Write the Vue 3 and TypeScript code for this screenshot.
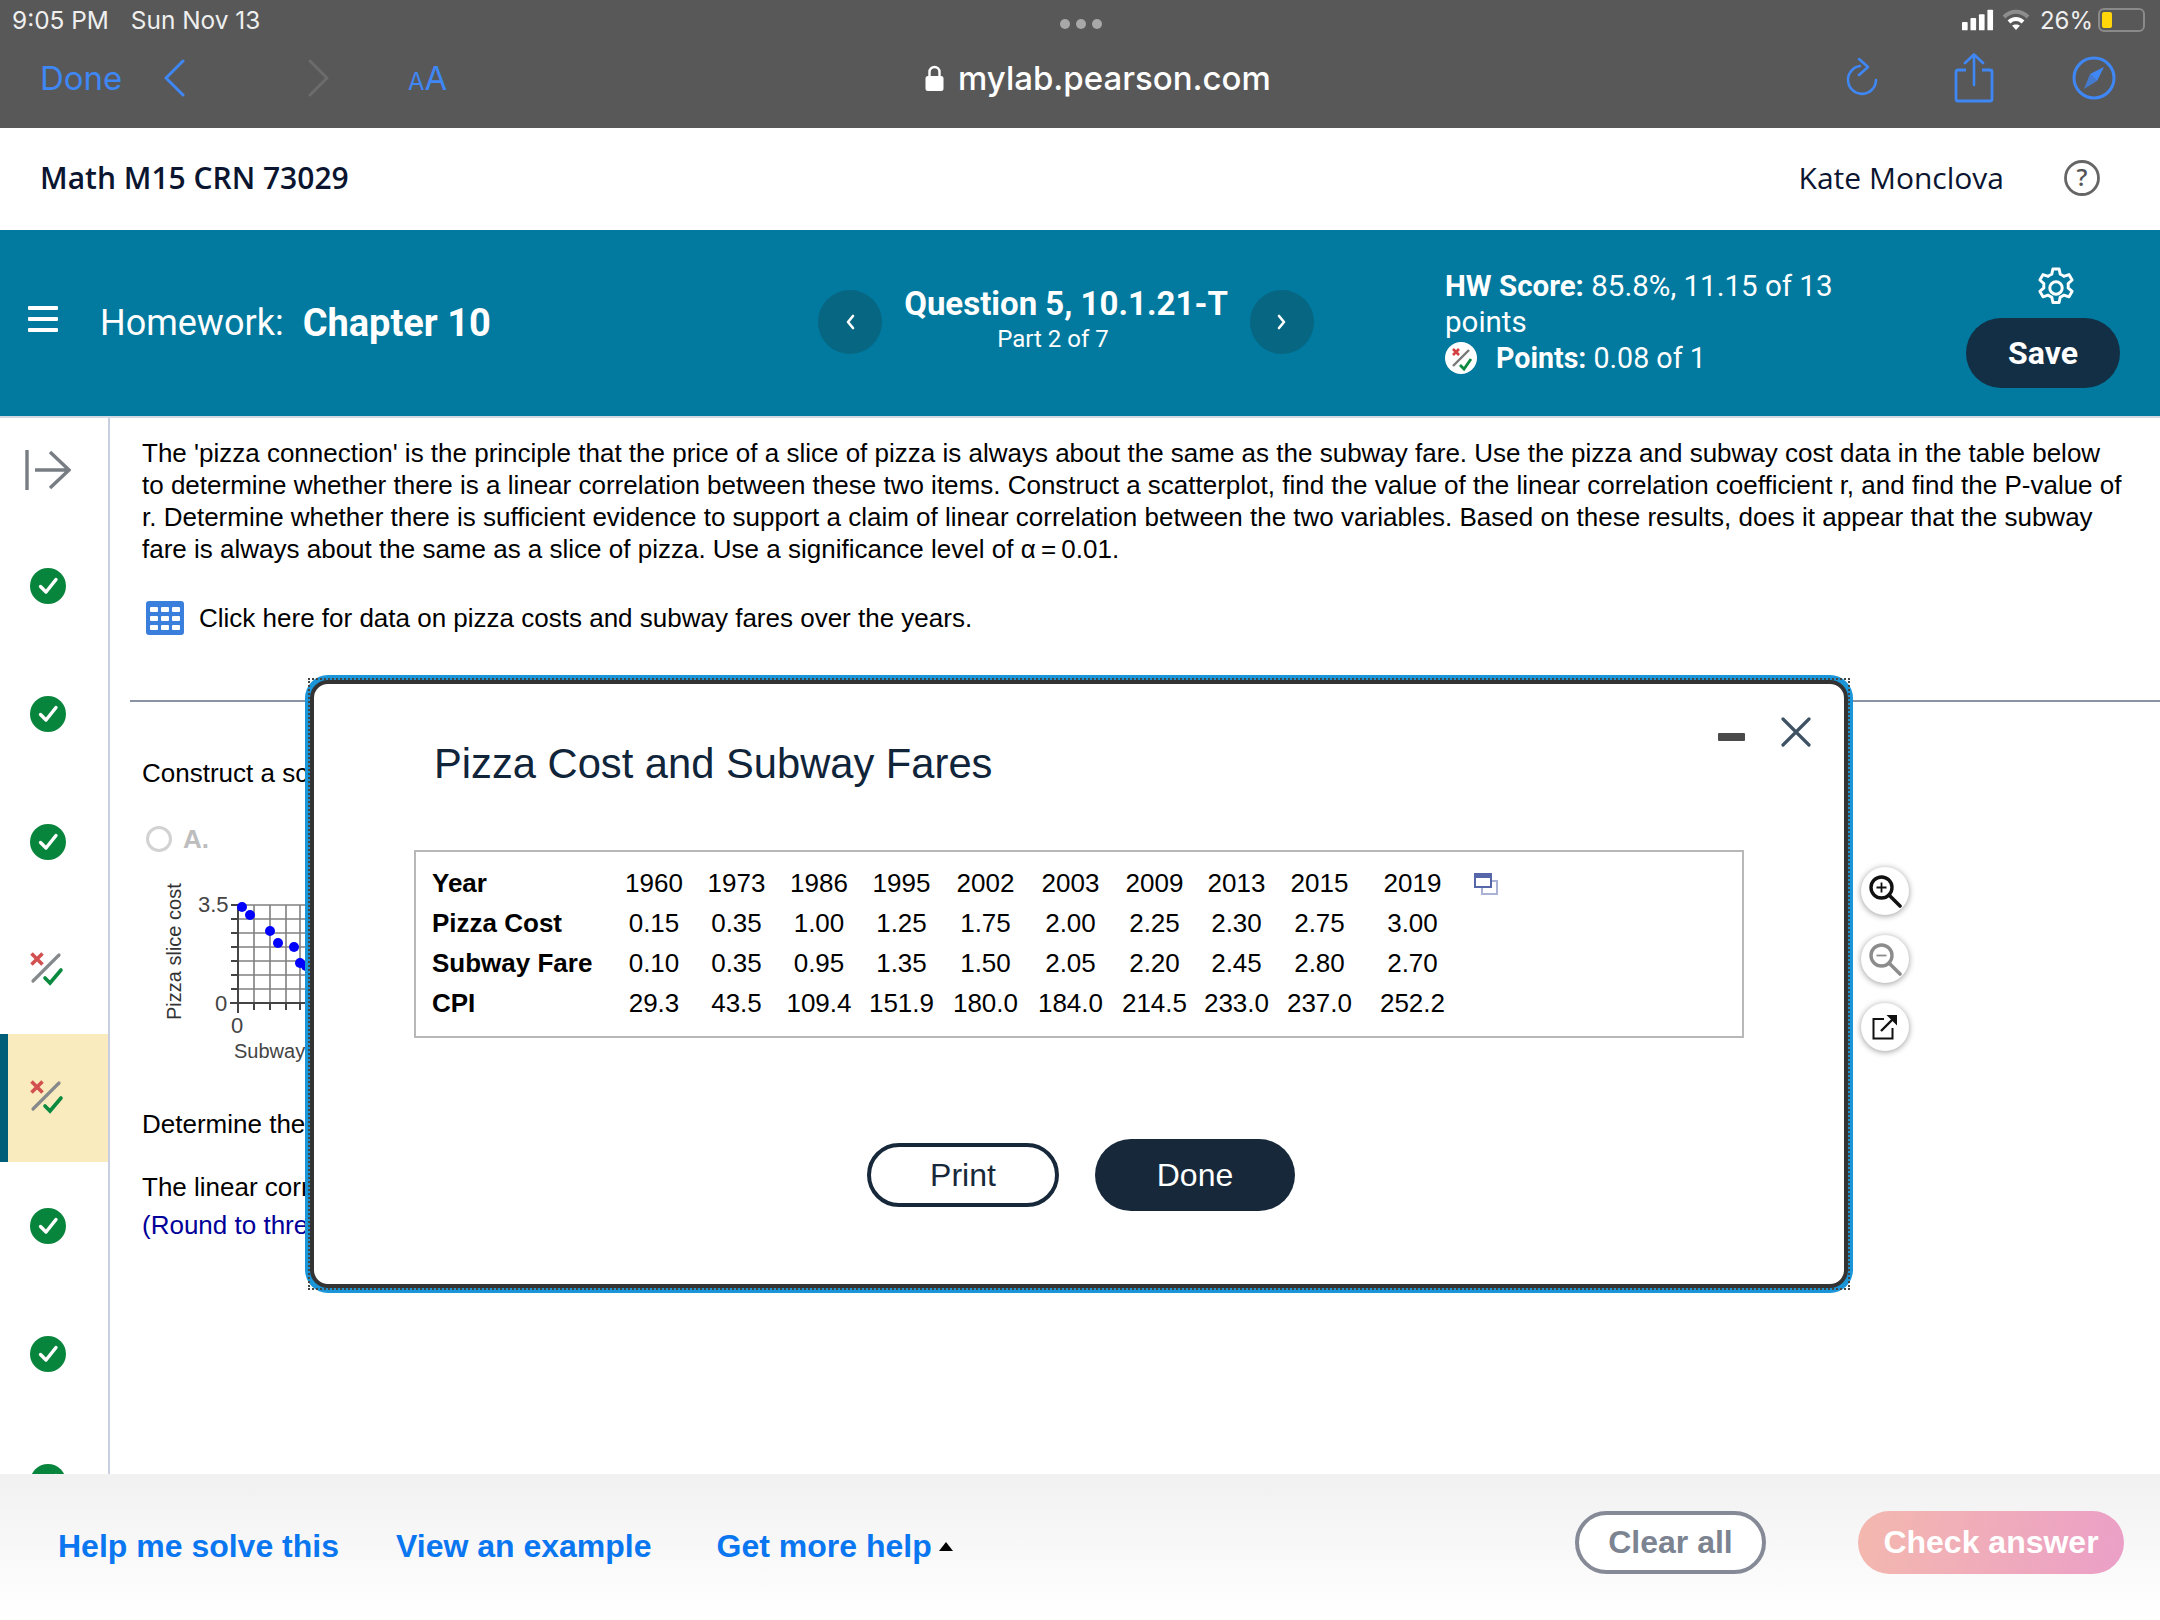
<script setup lang="ts">
// Sidebar question states, top to bottom
const questions = ['done', 'done', 'done', 'partial', 'current', 'done', 'done', 'done']

// Column widths of the data table, label column first
const colWidths = [181, 82, 83, 82, 83, 85, 85, 83, 81, 85, 101]

const rows = [
  { label: 'Year', cells: ['1960', '1973', '1986', '1995', '2002', '2003', '2009', '2013', '2015', '2019'] },
  { label: 'Pizza Cost', cells: ['0.15', '0.35', '1.00', '1.25', '1.75', '2.00', '2.25', '2.30', '2.75', '3.00'] },
  { label: 'Subway Fare', cells: ['0.10', '0.35', '0.95', '1.35', '1.50', '2.05', '2.20', '2.45', '2.80', '2.70'] },
  { label: 'CPI', cells: ['29.3', '43.5', '109.4', '151.9', '180.0', '184.0', '214.5', '233.0', '237.0', '252.2'] },
]

// Scatterplot points, in the chart's own pixels
const points = [
  [82, 27], [90, 35], [110, 51], [118, 63], [134, 67], [140, 83], [146, 86],
]
const gridX = [78, 94, 110, 126, 140, 156]
const gridY = [25, 39, 53, 67, 81, 95, 109, 123]
</script>

<template>
  <div class="page">
    <div class="browser">
      <div class="status">
        <span class="clock">9:05 PM</span>
        <span class="date">Sun Nov 13</span>
        <span class="dots"><i></i><i></i><i></i></span>
        <span class="status-right">
          <svg width="32" height="22" viewBox="0 0 34 22">
            <rect x="0" y="13" width="6" height="9" rx="1" fill="#fff" />
            <rect x="9" y="9" width="6" height="13" rx="1" fill="#fff" />
            <rect x="18" y="5" width="6" height="17" rx="1" fill="#fff" />
            <rect x="27" y="0" width="6" height="22" rx="1" fill="#fff" />
          </svg>
          <svg class="wifi" width="28" height="22" viewBox="0 0 28 22" fill="none">
            <path d="M2 8 C9 1 19 1 26 8" stroke="#8d8d8d" stroke-width="4" />
            <path d="M7 13 C11 9 17 9 21 13" stroke="#fff" stroke-width="4" />
            <path d="M14 21 L10 16.5 C12 15 16 15 18 16.5 Z" fill="#fff" />
          </svg>
          <span class="percent">26%</span>
          <span class="battery"><i></i></span>
        </span>
      </div>
      <div class="toolbar">
        <span class="tb-done">Done</span>
        <svg class="tb-back" width="24" height="38" viewBox="0 0 24 38" fill="none">
          <path d="M21 2 L4 19 L21 36" stroke="#3f87f5" stroke-width="3" stroke-linecap="round" stroke-linejoin="round" />
        </svg>
        <svg class="tb-forward" width="24" height="38" viewBox="0 0 24 38" fill="none">
          <path d="M3 2 L20 19 L3 36" stroke="#6c6c6c" stroke-width="3" stroke-linecap="round" stroke-linejoin="round" />
        </svg>
        <span class="tb-aa"><small>A</small>A</span>
        <span class="tb-url">
          <svg class="lock" width="19" height="26" viewBox="0 0 19 26" fill="none">
            <path d="M4.5 12 V7 a5 5 0 0 1 10 0 V12" stroke="#fff" stroke-width="2.4" />
            <rect x="0.5" y="11" width="18" height="15" rx="2.5" fill="#fff" />
          </svg>
          mylab.pearson.com
        </span>
        <svg class="tb-reload" width="34" height="40" viewBox="0 0 34 40" fill="none">
          <path d="M14 8 A14 14 0 1 0 30 22" stroke="#3f87f5" stroke-width="2.6" stroke-linecap="round" />
          <path d="M13 1 L22 9 L13 17" stroke="#3f87f5" stroke-width="2.6" stroke-linecap="round" stroke-linejoin="round" />
        </svg>
        <svg class="tb-share" width="40" height="50" viewBox="0 0 40 50" fill="none">
          <path d="M12 17 H4 a2 2 0 0 0 -2 2 V46 a2 2 0 0 0 2 2 H36 a2 2 0 0 0 2 -2 V19 a2 2 0 0 0 -2 -2 H28" stroke="#3f87f5" stroke-width="2.8" />
          <path d="M20 32 V2 M11 10 L20 1.5 L29 10" stroke="#3f87f5" stroke-width="2.6" stroke-linecap="round" stroke-linejoin="round" />
        </svg>
        <svg class="tb-compass" width="44" height="44" viewBox="0 0 44 44" fill="none">
          <circle cx="22" cy="22" r="20" stroke="#3f87f5" stroke-width="3" />
          <path d="M32 11 L25 25 L18 18 Z" fill="#3f87f5" />
          <path d="M12 33 L18 18 L25 25 Z" fill="#3f87f5" opacity="0.75" />
        </svg>
      </div>
    </div>

    <header class="course">
      <span class="course-name">Math M15 CRN 73029</span>
      <span class="user-name">Kate Monclova</span>
      <svg class="help" width="36" height="36" viewBox="0 0 36 36" fill="none">
        <circle cx="18" cy="18" r="16.5" stroke="#666" stroke-width="2.8" />
        <text x="18" y="26" text-anchor="middle" class="help-mark">?</text>
      </svg>
    </header>

    <section class="hw-bar">
      <div class="hw-title">
        <span class="burger"><i></i><i></i><i></i></span>
        <span class="hw-label">Homework:</span>
        <strong class="hw-chapter">Chapter 10</strong>
      </div>
      <div class="q-nav">
        <span class="q-arrow">
          <svg width="10" height="16" viewBox="0 0 10 16" fill="none">
            <path d="M8 2 L3 8 L8 14" stroke="#fff" stroke-width="2.6" stroke-linecap="round" stroke-linejoin="round" />
          </svg>
        </span>
        <div class="q-text">
          <strong>Question 5, 10.1.21-T</strong>
          <span>Part 2 of 7</span>
        </div>
        <span class="q-arrow">
          <svg width="10" height="16" viewBox="0 0 10 16" fill="none">
            <path d="M2 2 L7 8 L2 14" stroke="#fff" stroke-width="2.6" stroke-linecap="round" stroke-linejoin="round" />
          </svg>
        </span>
      </div>
      <div class="score">
        <div><b>HW Score:</b> 85.8%, 11.15 of 13 points</div>
        <div class="score-points">
          <svg width="32" height="32" viewBox="0 0 32 32" fill="none">
            <circle cx="16" cy="16" r="16" fill="#fff" />
            <path d="M8 7 L14 13 M14 7 L8 13" stroke="#d2403f" stroke-width="2.6" />
            <path d="M8 24 L24 8" stroke="#777" stroke-width="2.4" />
            <path d="M15 23 L19 27 L26 17" stroke="#0a8a3f" stroke-width="2.8" />
          </svg>
          <span><b>Points:</b> 0.08 of 1</span>
        </div>
      </div>
      <div class="save-col">
        <svg class="gear" width="44" height="44" viewBox="0 0 24 24" fill="none" stroke="#fff" stroke-width="1.6" stroke-linejoin="round">
          <circle cx="12" cy="12" r="3.4" />
          <path d="M10.3 1.6 h3.4 l.6 2.9 a8 8 0 0 1 2 1.15 l2.8-.95 1.7 2.95 -2.2 1.95 a8 8 0 0 1 0 2.3 l2.2 1.95 -1.7 2.95 -2.8-.95 a8 8 0 0 1-2 1.15 l-.6 2.9 h-3.4 l-.6-2.9 a8 8 0 0 1-2-1.15 l-2.8.95 -1.7-2.95 2.2-1.95 a8 8 0 0 1 0-2.3 L3.2 7.65 4.9 4.7 l2.8.95 a8 8 0 0 1 2-1.15 Z" />
        </svg>
        <button class="save">Save</button>
      </div>
    </section>

    <div class="workspace">
      <aside class="sidebar">
        <div class="collapse">
          <svg width="46" height="42" viewBox="0 0 46 42" fill="none" stroke="#777d82" stroke-width="3.4">
            <path d="M2 1 V41" />
            <path d="M10 21 H43 M25 3 L44 21 L25 39" />
          </svg>
        </div>
        <div
          v-for="(state, i) in questions"
          :key="i"
          :class="['side-item', { active: state === 'current' }]"
        >
          <svg v-if="state === 'done'" width="36" height="36" viewBox="0 0 36 36" fill="none">
            <circle cx="18" cy="18" r="18" fill="#08853c" />
            <path d="M10.5 18.5 L16 24 L26 11.5" stroke="#fff" stroke-width="3.4" stroke-linecap="round" stroke-linejoin="round" />
          </svg>
          <svg v-else class="partial" width="34" height="34" viewBox="0 0 34 34" fill="none">
            <path d="M1.5 1.5 L12.5 12.5 M12.5 1.5 L1.5 12.5" stroke="#d2504f" stroke-width="3.6" />
            <path d="M3 29 L29 3" stroke="#85898c" stroke-width="3.2" stroke-linecap="round" />
            <path d="M15 26 L20 31 L31 18" stroke="#0a8a3f" stroke-width="3.6" stroke-linecap="round" />
          </svg>
        </div>
      </aside>

      <main class="content">
        <p class="prompt">
          The 'pizza connection' is the principle that the price of a slice of pizza is always about the same as the subway fare. Use the pizza and subway cost data in the table below to determine whether there is a linear correlation between these two items. Construct a scatterplot, find the value of the linear correlation coefficient r, and find the P-value of r. Determine whether there is sufficient evidence to support a claim of linear correlation between the two variables. Based on these results, does it appear that the subway fare is always about the same as a slice of pizza. Use a significance level of α&#8201;=&#8201;0.01.
        </p>
        <div class="data-link">
          <svg class="table-icon" width="38" height="34" viewBox="0 0 38 34">
            <rect width="38" height="34" rx="3" fill="#3b7fdc" />
            <g fill="#fff">
              <template v-for="r in 3" :key="r">
                <rect v-for="c in 3" :key="c" :x="4 + (c - 1) * 11" :y="6 + (r - 1) * 9" width="8" height="5" rx="1" />
              </template>
            </g>
          </svg>
          <span>Click here for data on pizza costs and subway fares over the years.</span>
        </div>
        <hr class="divider" />
        <p class="construct">Construct a scatterplot.</p>
        <div class="option">
          <span class="radio"></span>
          <b>A.</b>
        </div>
        <svg class="chart" width="200" height="185" viewBox="0 0 200 185" fill="none">
          <text class="axis-title" transform="translate(21 140) rotate(-90)">Pizza slice cost</text>
          <text class="axis-num" x="38" y="32">3.5</text>
          <text class="axis-num" x="55" y="131">0</text>
          <text class="axis-num" x="71" y="153">0</text>
          <text class="axis-name" x="74" y="178">Subway</text>
          <path v-for="x in gridX" :key="'x' + x" :d="`M${x} 25 V123`" stroke="#808080" stroke-width="1.6" />
          <path v-for="y in gridY" :key="'y' + y" :d="`M71 ${y} H160`" stroke="#808080" stroke-width="1.6" />
          <path d="M78 25 V133 M70 123 H160" stroke="#444" stroke-width="2" />
          <path v-for="y in gridY" :key="'t' + y" :d="`M71 ${y} H78`" stroke="#444" stroke-width="2" />
          <path v-for="x in gridX" :key="'u' + x" :d="`M${x} 123 V130`" stroke="#444" stroke-width="2" />
          <circle v-for="(p, i) in points" :key="i" :cx="p[0]" :cy="p[1]" r="5" fill="#0000ff" />
        </svg>
        <p class="determine">Determine the linear correlation coefficient.</p>
        <p class="linear">The linear correlation coefficient is r =</p>
        <p class="round">(Round to three decimal places as needed.)</p>
      </main>
    </div>

    <footer class="actions">
      <a class="help-link">Help me solve this</a>
      <a class="help-link">View an example</a>
      <a class="help-link more">Get more help <i class="caret"></i></a>
      <button class="clear">Clear all</button>
      <button class="check">Check answer</button>
    </footer>

    <!-- Dialog over the page -->
    <div class="dialog">
      <div class="dialog-tools">
        <span class="minimize"></span>
        <svg width="30" height="30" viewBox="0 0 30 30" fill="none">
          <path d="M2 2 L28 28 M28 2 L2 28" stroke="#3f5263" stroke-width="3.2" stroke-linecap="round" />
        </svg>
      </div>
      <h2 class="dialog-title">Pizza Cost and Subway Fares</h2>
      <div class="table-box">
        <table class="data">
          <colgroup>
            <col v-for="(w, i) in colWidths" :key="i" :style="{ width: w + 'px' }" />
          </colgroup>
          <tbody>
            <tr v-for="row in rows" :key="row.label">
              <th>{{ row.label }}</th>
              <td v-for="(c, i) in row.cells" :key="i">{{ c }}</td>
            </tr>
          </tbody>
        </table>
        <svg class="copy" width="24" height="22" viewBox="0 0 24 22" fill="none">
          <rect x="8" y="8" width="15" height="13" stroke="#aab3d6" stroke-width="2" />
          <rect x="1" y="1" width="16" height="13" fill="#fff" stroke="#5567a8" stroke-width="2" />
          <rect x="1" y="1" width="16" height="4" fill="#5567a8" />
        </svg>
      </div>
      <div class="dialog-buttons">
        <button class="print">Print</button>
        <button class="done">Done</button>
      </div>
    </div>

    <!-- Floating zoom tools beside the dialog -->
    <div class="float-tools">
      <span class="float-btn">
        <svg width="34" height="34" viewBox="0 0 34 34" fill="none" stroke="#111">
          <circle cx="13.5" cy="13.5" r="10.5" stroke-width="3.4" />
          <path d="M21 21 L32 32" stroke-width="3.6" stroke-linecap="round" />
          <path d="M8.5 13.5 H18.5 M13.5 8.5 V18.5" stroke-width="1.8" />
        </svg>
      </span>
      <span class="float-btn">
        <svg width="34" height="34" viewBox="0 0 34 34" fill="none" stroke="#8c8c8c">
          <circle cx="13.5" cy="13.5" r="10.5" stroke-width="3.4" />
          <path d="M21 21 L32 32" stroke-width="3.6" stroke-linecap="round" />
          <path d="M8.5 13.5 H18.5" stroke-width="1.8" />
        </svg>
      </span>
      <span class="float-btn">
        <svg width="26" height="26" viewBox="0 0 26 26" fill="none" stroke="#111" stroke-width="2">
          <path d="M12 5 H1.5 V24.5 H20.5 V14" />
          <path d="M9 17 L21 5" stroke-width="2.4" />
          <path d="M14.5 1 H25 V11.5 Z" fill="#111" stroke="none" />
        </svg>
      </span>
    </div>
  </div>
</template>

<style scoped>
.page {
  position: relative;
  width: 2160px;
  height: 1620px;
  overflow: hidden;
  display: flex;
  flex-direction: column;
  background: #fff;
  font-family: 'Liberation Sans', Arial, sans-serif;
  color: #000;
}
p {
  margin: 0;
}
button {
  font-family: inherit;
  cursor: pointer;
}

/* Browser chrome */
.browser {
  flex: 0 0 128px;
  background: #585858;
  color: #fff;
  font-family: Inter, 'Liberation Sans', sans-serif;
}
.status {
  height: 40px;
  display: flex;
  align-items: center;
  padding: 0 15px 0 12px;
  font-size: 24.4px;
  color: #efefef;
}
.date {
  margin-left: 22px;
}
.dots {
  display: flex;
  gap: 6px;
  margin-left: 800px;
  margin-top: 8px;
}
.dots i {
  width: 10px;
  height: 10px;
  border-radius: 50%;
  background: #a8a8a8;
}
.status-right {
  margin-left: auto;
  display: flex;
  align-items: center;
}
.wifi {
  margin-left: 8px;
}
.percent {
  margin-left: 10px;
  font-size: 24px;
}
.battery {
  margin-left: 5px;
  width: 47px;
  height: 24px;
  border: 2px solid #8a8a8a;
  border-radius: 6px;
  padding: 2px;
  box-sizing: border-box;
  display: flex;
}
.battery i {
  width: 10px;
  background: #ffd60a;
  border-radius: 2px;
}
.toolbar {
  height: 80px;
  display: flex;
  align-items: center;
  padding-left: 40px;
  padding-bottom: 4px;
  box-sizing: border-box;
}
.tb-done {
  width: 122px;
  font-size: 33px;
  color: #3f87f5;
}
.tb-forward {
  margin-left: 121px;
}
.tb-aa {
  margin-left: 77px;
  width: 40px;
  font-size: 33px;
  color: #3f87f5;
  white-space: nowrap;
}
.tb-aa small {
  font-size: 24px;
}
.tb-url {
  margin-left: 477px;
  width: 345px;
  display: flex;
  align-items: center;
  gap: 14px;
  font-size: 33px;
  font-weight: 500;
  white-space: nowrap;
}
.lock {
  flex-shrink: 0;
}
.tb-reload {
  margin-left: 576px;
}
.tb-share {
  margin-left: 74px;
}
.tb-compass {
  margin-left: 78px;
}

/* Course header */
.course {
  flex: 0 0 102px;
  box-sizing: border-box;
  display: flex;
  align-items: center;
  padding: 0 60px 3px 40px;
  font-family: 'Open Sans', 'Liberation Sans', sans-serif;
  font-size: 30px;
  color: #0b1530;
}
.course-name {
  font-weight: 600;
}
.user-name {
  margin-left: auto;
}
.help {
  margin-left: 60px;
}
.help-mark {
  font-size: 24px;
  font-family: 'Open Sans', sans-serif;
  font-weight: 600;
  fill: #555;
}

/* Teal assignment bar */
.hw-bar {
  flex: 0 0 186px;
  box-sizing: content-box;
  display: flex;
  align-items: center;
  background: #02799e;
  color: #fff;
  border-bottom: 2px solid #d2d9e2;
  font-family: Roboto, 'Liberation Sans', sans-serif;
}
.hw-title {
  width: 790px;
  margin-left: 28px;
  display: flex;
  align-items: center;
  font-size: 36px;
}
.burger {
  display: flex;
  flex-direction: column;
  gap: 7px;
  width: 30px;
  margin-top: -8px;
}
.burger i {
  height: 4px;
  background: #fff;
  border-radius: 1px;
}
.hw-label {
  margin-left: 42px;
}
.hw-chapter {
  margin-left: 19px;
  font-size: 38px;
  font-weight: 700;
}
.q-nav {
  width: 496px;
  margin-top: -2px;
  display: flex;
  align-items: center;
  justify-content: space-between;
}
.q-arrow {
  width: 64px;
  height: 64px;
  border-radius: 50%;
  background: #076682;
  display: flex;
  align-items: center;
  justify-content: center;
}
.q-text {
  display: flex;
  flex-direction: column;
  align-items: center;
  margin-top: -6px;
}
.q-text strong {
  font-size: 33px;
  line-height: 40px;
  font-weight: 700;
}
.q-text span {
  font-size: 24px;
  line-height: 30px;
  margin-right: 26px;
}
.score {
  margin-left: 131px;
  width: 420px;
  font-size: 29.5px;
  line-height: 36px;
  margin-top: -2px;
}
.score b {
  font-weight: 700;
}
.score-points {
  display: flex;
  align-items: center;
}
.score-points span {
  margin-left: 19px;
  font-size: 28.6px;
}
.save-col {
  margin-left: auto;
  margin-right: 40px;
  display: flex;
  flex-direction: column;
  align-items: center;
  gap: 8px;
  margin-top: 8px;
}
.gear {
  margin-left: 25px;
}
.save {
  width: 154px;
  height: 70px;
  border: 0;
  border-radius: 35px;
  background: #132f45;
  color: #fff;
  font-family: Roboto, 'Liberation Sans', sans-serif;
  font-size: 32px;
  font-weight: 700;
}

/* Sidebar + question */
.workspace {
  flex: 1;
  min-height: 0;
  display: flex;
  overflow: hidden;
}
.sidebar {
  flex: 0 0 108px;
  border-right: 2px solid #c8cfe0;
}
.collapse {
  height: 104px;
  display: flex;
  align-items: center;
  padding-left: 25px;
}
.side-item {
  height: 128px;
  display: flex;
  align-items: center;
  justify-content: center;
  box-sizing: border-box;
  padding-right: 12px;
}
.side-item.active {
  background: #f9ebbd;
  border-left: 8px solid #005e78;
  padding-right: 20px;
}
.partial {
  margin-left: -2px;
  margin-top: -2px;
}
.content {
  flex: 1;
  padding: 19px 36px 0 32px;
  font-size: 26px;
  line-height: 32px;
}
.data-link {
  display: flex;
  align-items: center;
  gap: 15px;
  margin-top: 36px;
  padding-left: 4px;
}
.table-icon {
  flex-shrink: 0;
}
.divider {
  margin: 65px -36px 0 -12px;
  border: 0;
  border-top: 2px solid #8a93a3;
}
.construct {
  margin-top: 55px;
}
.option {
  display: flex;
  align-items: center;
  gap: 11px;
  margin-top: 26px;
  padding-left: 4px;
  height: 48px;
  color: #bdbdbd;
  font-size: 26px;
}
.radio {
  width: 26px;
  height: 26px;
  box-sizing: border-box;
  border: 3px solid #d2d2d2;
  border-radius: 50%;
}
.chart {
  display: block;
  margin-left: 18px;
  margin-top: 17px;
}
.axis-title {
  font-size: 20px;
  fill: #333;
}
.axis-num {
  font-size: 22px;
  fill: #444;
}
.axis-name {
  font-size: 20px;
  fill: #444;
}
.determine {
  margin-top: 43px;
}
.linear {
  margin-top: 31px;
}
.round {
  margin-top: 6px;
  color: #000099;
}

/* Bottom action bar */
.actions {
  flex: 0 0 146px;
  display: flex;
  align-items: center;
  padding: 0 36px 0 58px;
  background: linear-gradient(#f1f1f1, #ffffff);
}
.help-link {
  margin-right: 57px;
  margin-bottom: 2px;
  color: #0a76f0;
  font-size: 32px;
  font-weight: 700;
}
.more {
  margin-right: 0;
  margin-left: 8px;
  display: flex;
  align-items: center;
  gap: 7px;
}
.caret {
  width: 0;
  height: 0;
  border-left: 7px solid transparent;
  border-right: 7px solid transparent;
  border-bottom: 9px solid #000;
}
.clear {
  margin-left: auto;
  margin-bottom: 10px;
  width: 191px;
  height: 63px;
  border: 4px solid #858a96;
  border-radius: 32px;
  background: #fff;
  color: #7c8391;
  font-size: 32px;
  font-weight: 700;
}
.check {
  margin-left: 92px;
  margin-bottom: 10px;
  width: 266px;
  height: 63px;
  border: 0;
  border-radius: 32px;
  background: linear-gradient(100deg, #f4b8ae, #eb9fc7);
  color: #fff;
  font-size: 32px;
  font-weight: 700;
}

/* Data dialog */
.dialog {
  position: absolute;
  left: 310px;
  top: 680px;
  width: 1538px;
  height: 608px;
  box-sizing: border-box;
  border: 4px solid #333;
  border-radius: 18px;
  background: #fff;
  box-shadow: 0 0 0 5px #1a95d8;
  padding: 0 0 0 100px;
}
.dialog::after {
  content: '';
  position: absolute;
  inset: -6px;
  border: 2px dotted #444;
  pointer-events: none;
}
.dialog-tools {
  position: absolute;
  right: 33px;
  top: 33px;
  display: flex;
  align-items: center;
  gap: 36px;
}
.minimize {
  width: 27px;
  height: 8px;
  margin-top: 9px;
  background: #4a4a4a;
  border-radius: 1px;
}
.dialog-title {
  margin: 56px 0 0 20px;
  font-size: 41.7px;
  line-height: 48px;
  font-weight: 400;
  color: #10243a;
}
.table-box {
  position: relative;
  margin-top: 62px;
  width: 1330px;
  height: 188px;
  box-sizing: border-box;
  border: 2px solid #b8b8b8;
  padding: 11px 0 0 16px;
}
.data {
  border-collapse: collapse;
  table-layout: fixed;
  font-size: 26px;
}
.data th,
.data td {
  height: 40px;
  padding: 0;
  white-space: nowrap;
}
.data th {
  text-align: left;
  font-weight: 700;
}
.data td {
  text-align: center;
}
.copy {
  position: absolute;
  left: 1058px;
  top: 21px;
}
.dialog-buttons {
  display: flex;
  align-items: center;
  gap: 36px;
  margin: 101px 0 0 453px;
}
.print {
  width: 192px;
  height: 64px;
  border: 4px solid #16283a;
  border-radius: 32px;
  background: #fff;
  color: #16283a;
  font-size: 32px;
}
.done {
  width: 200px;
  height: 72px;
  border: 0;
  border-radius: 36px;
  background: #16283a;
  color: #fff;
  font-size: 32px;
}

/* Floating tools */
.float-tools {
  position: absolute;
  left: 1861px;
  top: 867px;
  display: flex;
  flex-direction: column;
  gap: 20px;
}
.float-btn {
  width: 48px;
  height: 48px;
  border-radius: 50%;
  background: #fff;
  box-shadow: 0 1px 6px rgba(0, 0, 0, 0.4);
  display: flex;
  align-items: center;
  justify-content: center;
}
</style>

<style>
html,
body {
  margin: 0;
  background: #fff;
}
</style>
